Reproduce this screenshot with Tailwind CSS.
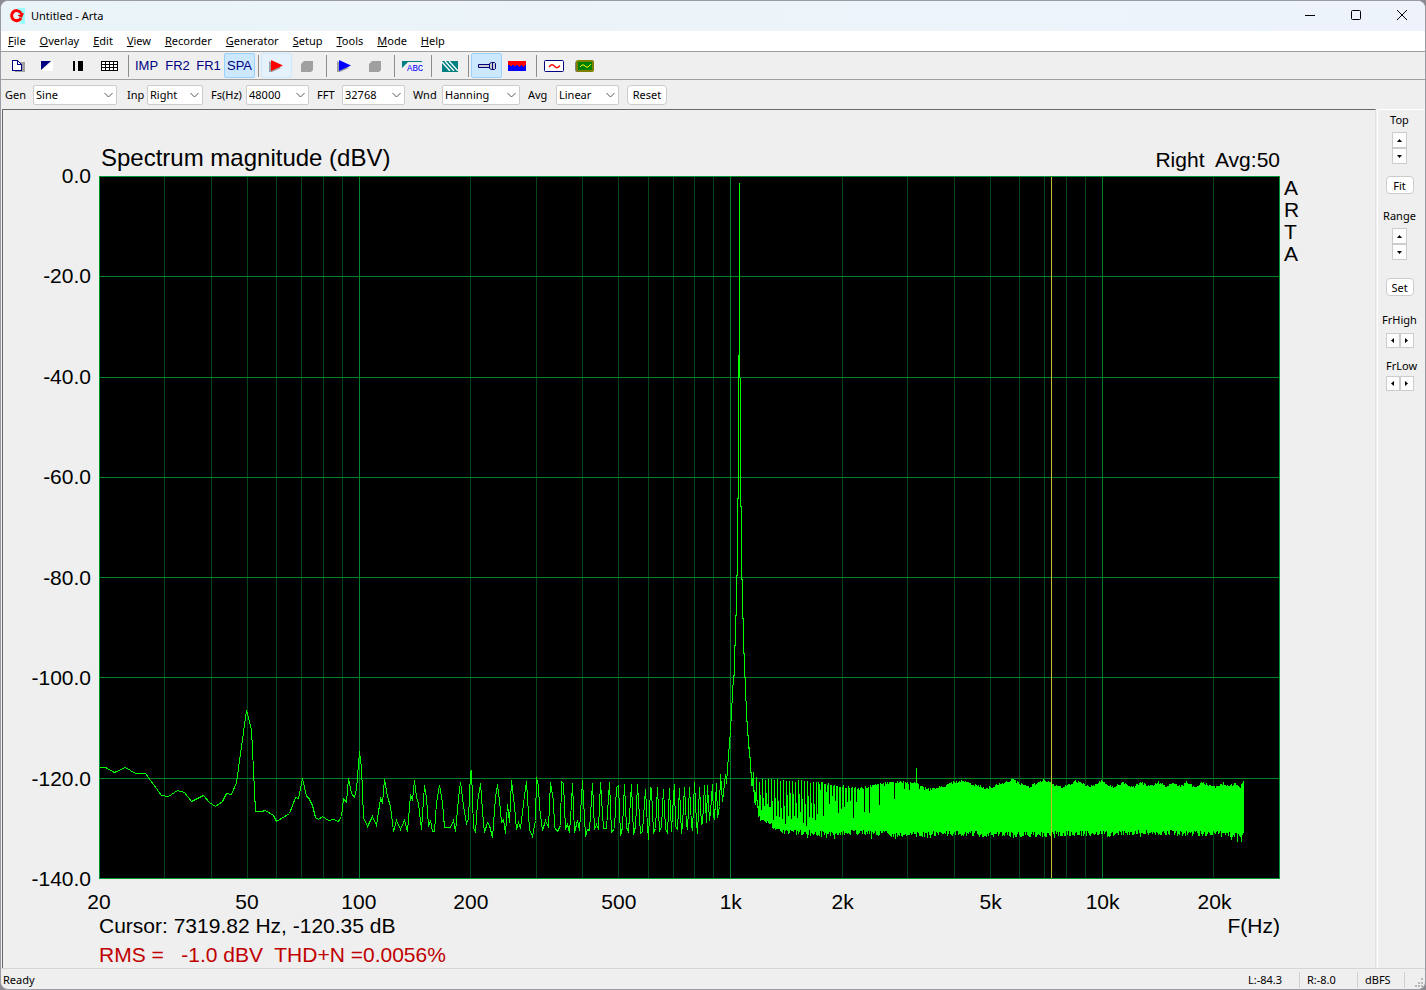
<!DOCTYPE html>
<html lang="en">

<head>
    <meta charset="UTF-8">
    <meta name="viewport" content="width=device-width, initial-scale=1.0">
    <title>Untitled - Arta</title>
    <script src="https://cdn.jsdelivr.net/npm/@tailwindcss/browser@4"></script>
</head>

<body class="bg-[#8c8a90]">

    <div class="h-screen flex flex-col bg-[#efefef] border border-[#9b9ba3] rounded-lg overflow-hidden text-black text-[11px] leading-4 font-['Noto_Sans','Open_Sans',sans-serif]">

        <!-- title bar -->
        <header class="h-[30px] shrink-0 flex items-center bg-linear-to-r from-[#eaf4f8] to-[#eef3fb] pl-2">
            <svg class="w-4 h-4" viewBox="0 0 16 16">
                <path d="M8 0h8v16h-5z" fill="#9ff" />
                <path d="M11.600 4.600A5 5 0 1 0 12 10" fill="none" stroke="#f00" stroke-width="3" />
                <path d="M8.500 7.500L15 5l-2 5z" fill="#f00" />
                <path d="M10 3l4 2-2 3z" fill="#f00" />
            </svg>
            <h1 class="ml-1.5 text-[11px]">Untitled - Arta</h1>
            <div class="ml-auto flex h-full">
                <button class="w-[46px] flex items-center justify-center" aria-label="Minimize">
                    <svg class="w-3 h-3" viewBox="0 0 12 12"><path d="M1 5.500h10" stroke="#000" /></svg>
                </button>
                <button class="w-[46px] flex items-center justify-center" aria-label="Maximize">
                    <svg class="w-3 h-3" viewBox="0 0 12 12"><rect x="1.500" y=".5" width="9" height="9" rx="1" fill="none" stroke="#000" /></svg>
                </button>
                <button class="w-[46px] flex items-center justify-center" aria-label="Close">
                    <svg class="w-3 h-3" viewBox="0 0 12 12"><path d="M1 0l10 10M11 0L1 10" stroke="#000" /></svg>
                </button>
            </div>
        </header>

        <!-- menu -->
        <nav class="h-5 shrink-0 flex items-center gap-[14px] bg-white pl-[7px]">
            <button><u>F</u>ile</button>
            <button><u>O</u>verlay</button>
            <button><u>E</u>dit</button>
            <button><u>V</u>iew</button>
            <button><u>R</u>ecorder</button>
            <button><u>G</u>enerator</button>
            <button><u>S</u>etup</button>
            <button><u>T</u>ools</button>
            <button><u>M</u>ode</button>
            <button><u>H</u>elp</button>
        </nav>

        <!-- toolbar -->
        <div class="h-[28px] shrink-0 flex items-center border-t border-[#a0a0a0] text-[13px] text-[#000080] font-['Liberation_Sans',sans-serif]">
            <button class="w-[31px] h-[25px] border border-transparent" aria-label="New">
                <svg class="w-[29px] h-[23px]" viewBox="0 0 29 23" shape-rendering="crispEdges">
                    <path d="M13 8h10v10H13z" fill="#a0a0a0" />
                    <path d="M10.500 6.500h5l4 4v6h-9z" fill="#fff" stroke="#000080" />
                    <path d="M15.500 6.500v4h4" fill="none" stroke="#000080" />
                </svg>
            </button>
            <button class="w-[31px] h-[25px] border border-transparent" aria-label="Overlay">
                <svg class="w-[29px] h-[23px]" viewBox="0 0 29 23">
                    <path d="M8 17L20 7v10z" fill="#fff" />
                    <path d="M8 7h10L8 16z" fill="#000080" />
                </svg>
            </button>
            <button class="w-[31px] h-[25px] border border-transparent" aria-label="Pause">
                <svg class="w-[29px] h-[23px]" viewBox="0 0 29 23" shape-rendering="crispEdges">
                    <path d="M9 7h2v10H9zM14 7h5v10h-5z" />
                </svg>
            </button>
            <button class="w-[31px] h-[25px] border border-transparent" aria-label="Grid">
                <svg class="w-[29px] h-[23px]" viewBox="0 0 29 23" shape-rendering="crispEdges">
                    <path d="M6 7h17v10H6z" fill="#fff" />
                    <path d="M6.500 7.500h16v9h-16zM6 10.500h17M6 13.500h17M10.500 7v10M14.500 7v10M18.500 7v10" fill="none" stroke="#000" />
                </svg>
            </button>
            <div class="w-1.5 flex justify-center"><i class="w-px h-[22px] bg-[#8c8c8c]"></i></div>
            <button class="w-[31px] h-[25px] border border-transparent">IMP</button>
            <button class="w-[31px] h-[25px] border border-transparent">FR2</button>
            <button class="w-[31px] h-[25px] border border-transparent">FR1</button>
            <button class="w-[31px] h-[25px] border border-[#99d1ff] bg-[#cce8ff] rounded-xs">SPA</button>
            <div class="w-1.5 flex justify-center"><i class="w-px h-[22px] bg-[#8c8c8c]"></i></div>
            <button class="w-[31px] h-[25px] border border-[#cfe8fb] bg-[#e5f1fb] rounded-xs" aria-label="Record">
                <svg class="w-[29px] h-[23px]" viewBox="0 0 29 23">
                    <path d="M7 7v11h3l9-4z" fill="#a0a0a0" />
                    <path d="M9 6v11L21 11.500z" fill="#f00" />
                </svg>
            </button>
            <button class="w-[31px] h-[25px] border border-transparent" aria-label="Stop record">
                <svg class="w-[29px] h-[23px]" viewBox="0 0 29 23"><path d="M11 7h9v9l-2 2H8v-8z" fill="#a0a0a0" /></svg>
            </button>
            <div class="w-1.5 flex justify-center"><i class="w-px h-[22px] bg-[#8c8c8c]"></i></div>
            <button class="w-[31px] h-[25px] border border-transparent" aria-label="Generate">
                <svg class="w-[29px] h-[23px]" viewBox="0 0 29 23">
                    <path d="M7 7v11h3l9-4z" fill="#a0a0a0" />
                    <path d="M9 6v11L21 11.500z" fill="#00f" />
                </svg>
            </button>
            <button class="w-[31px] h-[25px] border border-transparent" aria-label="Stop generator">
                <svg class="w-[29px] h-[23px]" viewBox="0 0 29 23"><path d="M11 7h9v9l-2 2H8v-8z" fill="#a0a0a0" /></svg>
            </button>
            <div class="w-1.5 flex justify-center"><i class="w-px h-[22px] bg-[#8c8c8c]"></i></div>
            <button class="w-[31px] h-[25px] border border-transparent" aria-label="Label">
                <svg class="w-[29px] h-[23px]" viewBox="0 0 29 23">
                    <path d="M4 7h20v1H10l-6 6z" fill="#008080" />
                    <text x="9" y="17" font-size="9" font-family="Liberation Mono" fill="#00f">ABC</text>
                </svg>
            </button>
            <div class="w-1.5 flex justify-center"><i class="w-px h-[22px] bg-[#8c8c8c]"></i></div>
            <button class="w-[31px] h-[25px] border border-transparent" aria-label="Hatch">
                <svg class="w-[29px] h-[23px]" viewBox="0 0 29 23">
                    <path d="M7 7h16v11H7z" fill="#008080" />
                    <path d="M7 8l8 9M10 7l9 10M14 7l9 10" stroke="#fff" stroke-width="1.200" />
                    <path d="M7 17.500h16" stroke="#008080" />
                </svg>
            </button>
            <div class="w-1.5 flex justify-center"><i class="w-px h-[22px] bg-[#8c8c8c]"></i></div>
            <button class="w-[31px] h-[25px] border border-[#99d1ff] bg-[#cce8ff] rounded-xs" aria-label="Pin">
                <svg class="w-[29px] h-[23px]" viewBox="0 0 29 23">
                    <path d="M6.500 10.500h11v3h-11z" fill="#ccc" stroke="#000080" />
                    <path d="M17.500 9.500l2-1h3l1 1v5l-1 1h-3l-2-1z" fill="#ccc" stroke="#000080" />
                    <path d="M20.500 8v8" stroke="#000080" />
                </svg>
            </button>
            <button class="w-[31px] h-[25px] border border-transparent" aria-label="Spectrogram">
                <svg class="w-[29px] h-[23px]" viewBox="0 0 29 23" shape-rendering="crispEdges">
                    <path d="M5 7h18v10H5z" fill="#00f" />
                    <path d="M5 7h18v4h-1l-2 2-2-2-2 2-2-3-2 3-2-2-2 1-3-1z" fill="#f00" />
                </svg>
            </button>
            <div class="w-1.5 flex justify-center"><i class="w-px h-[22px] bg-[#8c8c8c]"></i></div>
            <button class="w-[31px] h-[25px] border border-transparent" aria-label="Signal">
                <svg class="w-[29px] h-[23px]" viewBox="0 0 29 23">
                    <rect x="4.500" y="6.500" width="19" height="11" rx="1" fill="#fff" stroke="#000080" />
                    <path d="M9 13l2-2h2l3 2.500h2l2-2" fill="none" stroke="#f00" stroke-width="1.300" />
                </svg>
            </button>
            <button class="w-[31px] h-[25px] border border-transparent" aria-label="Scope">
                <svg class="w-[29px] h-[23px]" viewBox="0 0 29 23">
                    <rect x="4" y="7" width="18" height="11" rx="2" fill="#808080" />
                    <rect x="6" y="7" width="16" height="10" rx="1" fill="#008000" stroke="#808000" stroke-width="2" />
                    <path d="M9 13l2-2 2 0 2 2h2l3-3" fill="none" stroke="#ff0" />
                </svg>
            </button>
        </div>

        <!-- measurement settings -->
        <div class="h-[30px] shrink-0 flex items-center gap-2 border-t border-[#a0a0a0] pl-1">
            <div class="flex items-center">
                <label for="gen" class="w-7">Gen</label>
                <div class="relative">
                    <select id="gen" class="w-[84px] h-5 appearance-none bg-white border border-[#ccc] rounded-xs pl-0.5"><option>Sine</option></select>
                    <svg class="absolute right-1 top-1.5 w-[9px] h-2" viewBox="0 0 9 8"><path d="M.5 2l4 4 4-4" fill="none" stroke="#555" /></svg>
                </div>
            </div>
            <div class="flex items-center">
                <label for="inp" class="w-[22px] pl-0.5">Inp</label>
                <div class="relative">
                    <select id="inp" class="w-14 h-5 appearance-none bg-white border border-[#ccc] rounded-xs pl-0.5"><option>Right</option></select>
                    <svg class="absolute right-1 top-1.5 w-[9px] h-2" viewBox="0 0 9 8"><path d="M.5 2l4 4 4-4" fill="none" stroke="#555" /></svg>
                </div>
            </div>
            <div class="flex items-center">
                <label for="fs" class="w-[35px]">Fs(Hz)</label>
                <div class="relative">
                    <select id="fs" class="w-[63px] h-5 appearance-none bg-white border border-[#ccc] rounded-xs pl-0.5"><option>48000</option></select>
                    <svg class="absolute right-1 top-1.5 w-[9px] h-2" viewBox="0 0 9 8"><path d="M.5 2l4 4 4-4" fill="none" stroke="#555" /></svg>
                </div>
            </div>
            <div class="flex items-center">
                <label for="fft" class="w-[25px]">FFT</label>
                <div class="relative">
                    <select id="fft" class="w-[63px] h-5 appearance-none bg-white border border-[#ccc] rounded-xs pl-0.5"><option>32768</option></select>
                    <svg class="absolute right-1 top-1.5 w-[9px] h-2" viewBox="0 0 9 8"><path d="M.5 2l4 4 4-4" fill="none" stroke="#555" /></svg>
                </div>
            </div>
            <div class="flex items-center">
                <label for="wnd" class="w-[29px]">Wnd</label>
                <div class="relative">
                    <select id="wnd" class="w-[78px] h-5 appearance-none bg-white border border-[#ccc] rounded-xs pl-0.5"><option>Hanning</option></select>
                    <svg class="absolute right-1 top-1.5 w-[9px] h-2" viewBox="0 0 9 8"><path d="M.5 2l4 4 4-4" fill="none" stroke="#555" /></svg>
                </div>
            </div>
            <div class="flex items-center">
                <label for="avg" class="w-7">Avg</label>
                <div class="relative">
                    <select id="avg" class="w-[63px] h-5 appearance-none bg-white border border-[#ccc] rounded-xs pl-0.5"><option>Linear</option></select>
                    <svg class="absolute right-1 top-1.5 w-[9px] h-2" viewBox="0 0 9 8"><path d="M.5 2l4 4 4-4" fill="none" stroke="#555" /></svg>
                </div>
            </div>
            <button class="w-10 h-5 bg-white border border-[#ccc] rounded-sm">Reset</button>
        </div>

        <div class="flex-1 min-h-0 flex">
            <!-- spectrum view -->
            <main class="flex-1 ml-px border-t border-l border-[#696969] border-r border-r-[#e0e0e0] grid grid-cols-[96px_1fr_95px] grid-rows-[66px_1fr_89px] text-[21px] leading-7 font-['Liberation_Sans',sans-serif]">
                <div class="col-start-2 flex items-end justify-between pb-0.5">
                    <h2 class="text-2xl leading-8 pl-0.5">Spectrum magnitude (dBV)</h2>
                    <div class="whitespace-pre">Right  Avg:50</div>
                </div>

                <div class="row-start-2 flex flex-col justify-between items-end pr-2">
                    <div class="h-0 flex items-center">0.0</div>
                    <div class="h-0 flex items-center">-20.0</div>
                    <div class="h-0 flex items-center">-40.0</div>
                    <div class="h-0 flex items-center">-60.0</div>
                    <div class="h-0 flex items-center">-80.0</div>
                    <div class="h-0 flex items-center">-100.0</div>
                    <div class="h-0 flex items-center">-120.0</div>
                    <div class="h-0 flex items-center">-140.0</div>
                </div>
                <div class="row-start-2 min-h-0">
                    <svg class="w-full h-full bg-black" viewBox="0 0 1181 703" preserveAspectRatio="none" shape-rendering="crispEdges" fill="none">
                        <path id="minor" stroke="#004618" />
                        <path id="major" stroke="#008228" />
                        <path d="M.5 .5h1180v702H.5z" stroke="#009632" />
                        <path id="trace" stroke="#0f0" />
                        <path d="M952.500 1v701" stroke="#c8be32" />
                    </svg>
                </div>
                <div class="row-start-2 pl-1 pt-[1px] leading-[22px] flex flex-col">
                    <span>A</span><span>R</span><span>T</span><span>A</span>
                </div>

                <div class="row-start-3 col-start-2 flex flex-col">
                    <div id="freqs" class="relative h-[35px] shrink-0"></div>
                    <div class="flex justify-between -mt-0.5">
                        <span>Cursor: 7319.82 Hz, -120.35 dB</span>
                        <span>F(Hz)</span>
                    </div>
                    <div class="whitespace-pre text-[#c00000] pt-px">RMS =   -1.0 dBV  THD+N =0.0056%</div>
                </div>
            </main>

            <!-- axis controls -->
            <aside class="w-[48px] ml-px shrink-0 border-l border-t border-white flex flex-col items-center pt-0.5 pr-1">
                <div>Top</div>
                <div class="w-[15px] mt-1 flex flex-col">
                    <button class="h-4 bg-[#fdfdfd] border border-[#ccc] flex items-center justify-center" aria-label="Top up"><svg class="w-[5px] h-[3px]" viewBox="0 0 5 3"><path d="M0 3h5L2.500 0z" /></svg></button>
                    <button class="h-4 bg-[#fdfdfd] border border-[#ccc] flex items-center justify-center" aria-label="Top down"><svg class="w-[5px] h-[3px]" viewBox="0 0 5 3"><path d="M0 0h5L2.500 3z" /></svg></button>
                </div>
                <button class="w-7 h-[18px] mt-3 leading-none bg-white border border-[#ccc] rounded-sm">Fit</button>
                <div class="mt-3.5">Range</div>
                <div class="w-[15px] mt-1 flex flex-col">
                    <button class="h-4 bg-[#fdfdfd] border border-[#ccc] flex items-center justify-center" aria-label="Range up"><svg class="w-[5px] h-[3px]" viewBox="0 0 5 3"><path d="M0 3h5L2.500 0z" /></svg></button>
                    <button class="h-4 bg-[#fdfdfd] border border-[#ccc] flex items-center justify-center" aria-label="Range down"><svg class="w-[5px] h-[3px]" viewBox="0 0 5 3"><path d="M0 0h5L2.500 3z" /></svg></button>
                </div>
                <button class="w-7 h-[18px] mt-[18px] leading-none bg-white border border-[#ccc] rounded-sm">Set</button>
                <div class="mt-4">FrHigh</div>
                <div class="flex mt-[5px]">
                    <button class="w-3.5 h-[15px] bg-[#fdfdfd] border border-[#ccc] flex items-center justify-center" aria-label="High left"><svg class="w-[3px] h-[5px]" viewBox="0 0 3 5"><path d="M3 0v5L0 2.500z" /></svg></button>
                    <button class="w-3.5 h-[15px] bg-[#fdfdfd] border border-[#ccc] flex items-center justify-center" aria-label="High right"><svg class="w-[3px] h-[5px]" viewBox="0 0 3 5"><path d="M0 0v5l3-2.500z" /></svg></button>
                </div>
                <div class="mt-2.5 pl-1">FrLow</div>
                <div class="flex mt-0.5">
                    <button class="w-3.5 h-[15px] bg-[#fdfdfd] border border-[#ccc] flex items-center justify-center" aria-label="Low left"><svg class="w-[3px] h-[5px]" viewBox="0 0 3 5"><path d="M3 0v5L0 2.500z" /></svg></button>
                    <button class="w-3.5 h-[15px] bg-[#fdfdfd] border border-[#ccc] flex items-center justify-center" aria-label="Low right"><svg class="w-[3px] h-[5px]" viewBox="0 0 3 5"><path d="M0 0v5l3-2.500z" /></svg></button>
                </div>
            </aside>
        </div>

        <!-- status bar -->
        <footer class="h-[21px] shrink-0 flex items-center border-t border-[#d5d5d5] pl-0.5 pt-0.5">
            <span>Ready</span>
            <span class="ml-auto w-[51px]">L:-84.3</span>
            <span class="w-[58px] border-l border-[#d0d0d0] pl-[7px]">R:-8.0</span>
            <span class="w-12 border-l border-r border-[#d0d0d0] pl-[7px]">dBFS</span>
            <svg class="w-5 h-5" viewBox="0 0 20 20"><path d="M16 8h2v2h-2zM13 12h2v2h-2zM16 12h2v2h-2zM10 15h2v2h-2zM13 15h2v2h-2zM16 15h2v2h-2z" fill="#b8b8b8" /></svg>
        </footer>
    </div>

    <script>
        const plotWidth = 1180;
        const decades = Math.log10(30000 / 20);

        function freqToX(freq) {
            return plotWidth * Math.log10(freq / 20) / decades;
        }

        // grid
        let minor = '';
        let major = '';
        for (const base of [10, 100, 1000, 10000]) {
            for (let i = 1; i < 10; i++) {
                const freq = base * i;
                if (freq <= 20 || freq >= 30000) {
                    continue;
                }
                const line = 'M' + (Math.floor(freqToX(freq) + 0.4) + 0.5) + ' 0V703';
                if (i == 1) {
                    major += line;
                }
                else {
                    minor += line;
                }
            }
        }
        for (const y of [100, 201, 301, 401, 501, 602]) {
            major += 'M0 ' + (y + 0.5) + 'H1181';
        }
        document.getElementById('minor').setAttribute('d', minor);
        document.getElementById('major').setAttribute('d', major);

        // frequency labels
        const labels = { 20: '20', 50: '50', 100: '100', 200: '200', 500: '500', 1000: '1k', 2000: '2k', 5000: '5k', 10000: '10k', 20000: '20k' };
        for (const freq in labels) {
            const span = document.createElement('span');
            span.className = 'absolute top-[9px] -translate-x-1/2';
            span.style.left = (100 * freqToX(freq) / plotWidth) + '%';
            span.innerText = labels[freq];
            document.getElementById('freqs').appendChild(span);
        }

        // low frequency part, point by point
        const points = [
            0, 591, 6, 591, 15, 596, 26, 591, 36, 597, 46, 597, 62, 619, 69, 620, 78, 614, 85, 616, 92, 625, 104, 619, 110, 626, 116, 630,
            123, 625, 127, 617, 132, 618, 137, 606, 147, 534, 152, 553, 156, 635, 162, 635, 166, 634, 174, 639, 177, 645, 190, 637,
            196, 621, 199, 622, 203, 602, 207, 620, 209, 621, 213, 629, 216, 641, 219, 643, 223, 640, 229, 644, 234, 643, 239, 645,
            242, 640, 244, 622, 247, 626, 249, 602, 252, 617, 255, 621, 257, 613, 260, 575, 262, 591, 264, 641, 268, 650, 273, 640,
            277, 649, 281, 622, 283, 626, 285, 603, 288, 620, 291, 630, 294, 655, 297, 644, 301, 653, 305, 644, 308, 655, 311, 619,
            313, 623, 315, 604, 317, 621, 319, 627, 322, 653, 325, 609, 327, 621, 329, 650, 331, 644, 333, 655, 335, 655, 337, 626, 340, 609,
            343, 626, 345, 651, 351, 651, 354, 644, 356, 655, 359, 622, 361, 606, 364, 629, 367, 647, 369, 642, 371, 596, 372, 594,
            374, 651, 376, 656, 378, 626, 381, 607, 384, 647, 385, 656, 388, 646, 390, 649, 393, 661, 396, 621, 398, 608, 400, 624,
            402, 646, 404, 643, 406, 657, 408, 628, 410, 646, 412, 604, 415, 630, 417, 653, 419, 646, 421, 652, 422, 644, 425, 619, 427, 605,
            430, 653, 433, 660, 436, 644, 437, 601, 439, 610, 440, 630, 443, 654, 446, 644, 449, 651, 451, 606, 454, 624, 455, 651,
            458, 655, 461, 649, 462, 605, 464, 607, 466, 652, 468, 648, 470, 656, 472, 627, 473, 607, 475, 656, 478, 644, 480, 654,
            483, 604, 486, 660, 488, 653, 490, 654, 493, 607, 495, 653, 497, 648, 499, 653, 501, 606, 504, 652, 507, 652, 510, 606, 512, 656,
            515, 652, 517, 611, 519, 609, 521, 659, 523, 651, 525, 608, 527, 651, 529, 655, 532, 608, 534, 658, 536, 650, 538, 608, 541, 657,
            543, 655, 546, 613, 548, 650, 549, 663, 551, 611, 552, 613, 554, 656, 556, 652, 558, 611, 560, 655, 562, 650, 564, 613,
            566, 652, 568, 657, 570, 612, 572, 655, 574, 620, 575, 608, 576, 650, 578, 653, 580, 612, 582, 657, 583, 648, 585, 611, 587, 648, 588, 653, 590, 611,
            592, 648, 593, 654, 595, 606, 597, 646, 598, 657, 600, 611, 602, 648, 603, 647, 605, 609, 607, 646, 608, 609, 610, 644, 611, 636, 613, 608, 614, 640, 615, 642,
            617, 607, 618, 641, 620, 630, 621, 598, 623, 625, 624, 616, 626, 598, 627, 607, 629, 579, 631, 555, 632, 535, 633, 519, 634, 499
        ];
        let trace = 'M';
        for (let i = 0; i < points.length; i += 2) {
            trace += (points[i] + 0.5) + ' ' + (points[i + 1] + 0.5) + ' ';
        }

        function addColumn(x, top, bottom) {
            trace += 'M' + (x + 0.5) + ' ' + top + 'V' + bottom;
        }

        // fundamental
        const peak = [
            635, 469, 500, 636, 439, 470, 637, 399, 440, 638, 322, 400, 639, 179, 323, 640, 7, 202, 641, 202, 331, 642, 330, 404,
            643, 403, 443, 644, 442, 478, 645, 477, 502, 646, 501, 525, 647, 525, 546, 648, 545, 560, 649, 559, 573, 650, 571, 582,
            651, 581, 597, 652, 596, 610, 653, 602, 610, 654, 596, 616, 655, 614, 627, 656, 616, 629, 657, 601, 625, 658, 624, 632,
            659, 630, 641, 660, 606, 640, 661, 619, 645, 662, 634, 644
        ];
        for (let i = 0; i < peak.length; i += 3) {
            addColumn(peak[i], peak[i + 1], peak[i + 2]);
        }

        // upper and lower edge of the noise band: x, y pairs
        const upper = [
            663, 604, 690, 604, 720, 607, 740, 610, 762, 612, 780, 608, 800, 606, 816, 607, 830, 613, 843, 611, 855, 606, 863, 605, 886, 612,
            892, 611, 913, 604, 929, 611, 944, 604, 963, 612, 976, 605, 991, 611, 1001, 605, 1014, 611, 1024, 606, 1033, 612, 1041, 606,
            1050, 611, 1059, 606, 1068, 611, 1074, 606, 1081, 611, 1087, 606, 1095, 611, 1103, 606, 1112, 611, 1118, 611, 1124, 607,
            1130, 611, 1135, 607, 1140, 612, 1144, 606
        ];
        const lower = [663, 643, 672, 651, 682, 657, 720, 659, 760, 658, 800, 660, 860, 659, 900, 660, 1000, 659, 1050, 658, 1100, 659, 1144, 660];

        function edge(list, x) {
            let i = 0;
            while (i < list.length - 4 && list[i + 2] < x) {
                i += 2;
            }
            const t = (x - list[i]) / (list[i + 2] - list[i]);
            return Math.round(list[i + 1] + t * (list[i + 3] - list[i + 1]));
        }

        let seed = 7;
        function random() {
            seed = (seed * 16807) % 2147483647;
            return seed / 2147483647;
        }

        for (let x = 663; x <= 1144; x++) {
            let top = edge(upper, x) + Math.floor(random() * 3) - 1;
            let bottom = edge(lower, x) + Math.floor(random() * 6) - 4;
            if (random() > 0.93) {
                bottom += 3;
            }
            // separate harmonics are still visible here
            if (x < 718 && x % 3 != 0) {
                top = x % 3 == 1 ? 617 + Math.floor(random() * 16) : bottom - 6 - Math.floor(random() * 14);
            }
            else if (x >= 718 && x < 760 && x % 3 == 1) {
                top += 6 + Math.floor(random() * 26);
            }
            else if (x >= 760 && x < 832 && x % 5 == 0) {
                top += Math.floor(random() * 34 * (840 - x) / 80);
            }
            if (x == 817) {
                top = 592;
            }
            addColumn(x, top, bottom);
        }
        addColumn(1138, 650, 666);
        addColumn(1142, 650, 666);
        document.getElementById('trace').setAttribute('d', trace);
    </script>

</body>

</html>
